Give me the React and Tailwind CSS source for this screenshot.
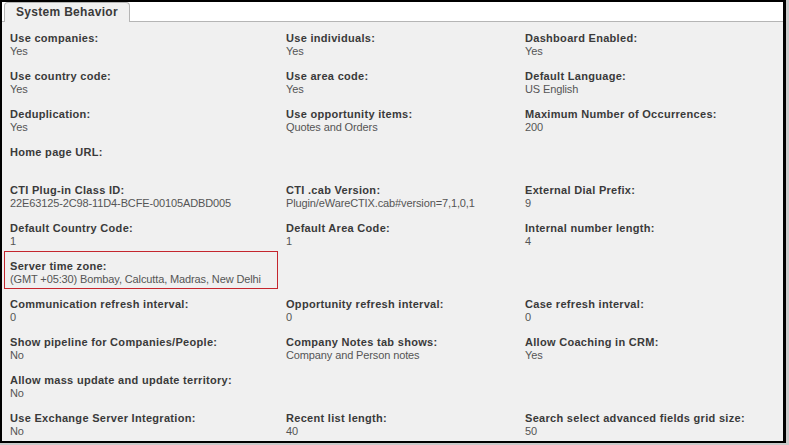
import React from 'react';

const rows = [
  [
    { label: 'Use companies:', value: 'Yes' },
    { label: 'Use individuals:', value: 'Yes' },
    { label: 'Dashboard Enabled:', value: 'Yes' },
  ],
  [
    { label: 'Use country code:', value: 'Yes' },
    { label: 'Use area code:', value: 'Yes' },
    { label: 'Default Language:', value: 'US English' },
  ],
  [
    { label: 'Deduplication:', value: 'Yes' },
    { label: 'Use opportunity items:', value: 'Quotes and Orders' },
    { label: 'Maximum Number of Occurrences:', value: '200' },
  ],
  [{ label: 'Home page URL:', value: '' }, null, null],
  [
    { label: 'CTI Plug-in Class ID:', value: '22E63125-2C98-11D4-BCFE-00105ADBD005' },
    { label: 'CTI .cab Version:', value: 'Plugin/eWareCTIX.cab#version=7,1,0,1' },
    { label: 'External Dial Prefix:', value: '9' },
  ],
  [
    { label: 'Default Country Code:', value: '1' },
    { label: 'Default Area Code:', value: '1' },
    { label: 'Internal number length:', value: '4' },
  ],
  [{ label: 'Server time zone:', value: '(GMT +05:30) Bombay, Calcutta, Madras, New Delhi', highlight: true }, null, null],
  [
    { label: 'Communication refresh interval:', value: '0' },
    { label: 'Opportunity refresh interval:', value: '0' },
    { label: 'Case refresh interval:', value: '0' },
  ],
  [
    { label: 'Show pipeline for Companies/People:', value: 'No' },
    { label: 'Company Notes tab shows:', value: 'Company and Person notes' },
    { label: 'Allow Coaching in CRM:', value: 'Yes' },
  ],
  [{ label: 'Allow mass update and update territory:', value: 'No' }, null, null],
  [
    { label: 'Use Exchange Server Integration:', value: 'No' },
    { label: 'Recent list length:', value: '40' },
    { label: 'Search select advanced fields grid size:', value: '50' },
  ],
];

const Field = ({ field }) => {
  if (!field) return <div className="h-[38px]" />;
  return (
    <div className="h-[38px]">
      <div
        className={
          field.highlight
            ? 'h-[38px] w-[274px] border border-[#c4262e] px-[5px] pt-[8px]'
            : 'h-[38px] px-[6px] pt-[9px]'
        }
      >
        <div className="text-[11px] leading-[13px] font-bold tracking-[0.3px] text-[#3a3a3a] whitespace-nowrap">{field.label}</div>
        <div className="text-[11px] leading-[13px] tracking-[-0.12px] text-[#555] whitespace-nowrap">{field.value}</div>
      </div>
    </div>
  );
};

export default function App() {
  return (
    <div className="w-[789px] h-[445px] bg-[#c9c9c9] overflow-hidden" style={{ fontFamily: '"Liberation Sans", Arial, sans-serif' }}>
      <div className="w-[786px] h-[443px] bg-white border-l-2 border-t-2 border-r-[3px] border-b-[3px] border-black flex flex-col">
        <div className="flex items-end h-[21px] bg-white">
          <div className="w-[2px] h-[20px] border-b border-[#b5b5b5]" />
          <div className="w-[126px] h-[20px] bg-[#f0f0f0] border border-b-0 border-[#b5b5b5] rounded-t-[4px] pl-[11px] pt-[2px] text-[12px] leading-[15px] font-bold tracking-[0.3px] text-[#3a3a3a]">
            System Behavior
          </div>
          <div className="flex-1 h-[20px] border-b border-[#b5b5b5]" />
        </div>
        <div className="flex-1 bg-[#f0f0f0] pl-[2px] pt-[1px]">
          <div className="grid grid-cols-[276px_239px_1fr]">
            {rows.map((row, i) => row.map((f, j) => <Field key={i + '-' + j} field={f} />))}
          </div>
        </div>
      </div>
    </div>
  );
}
